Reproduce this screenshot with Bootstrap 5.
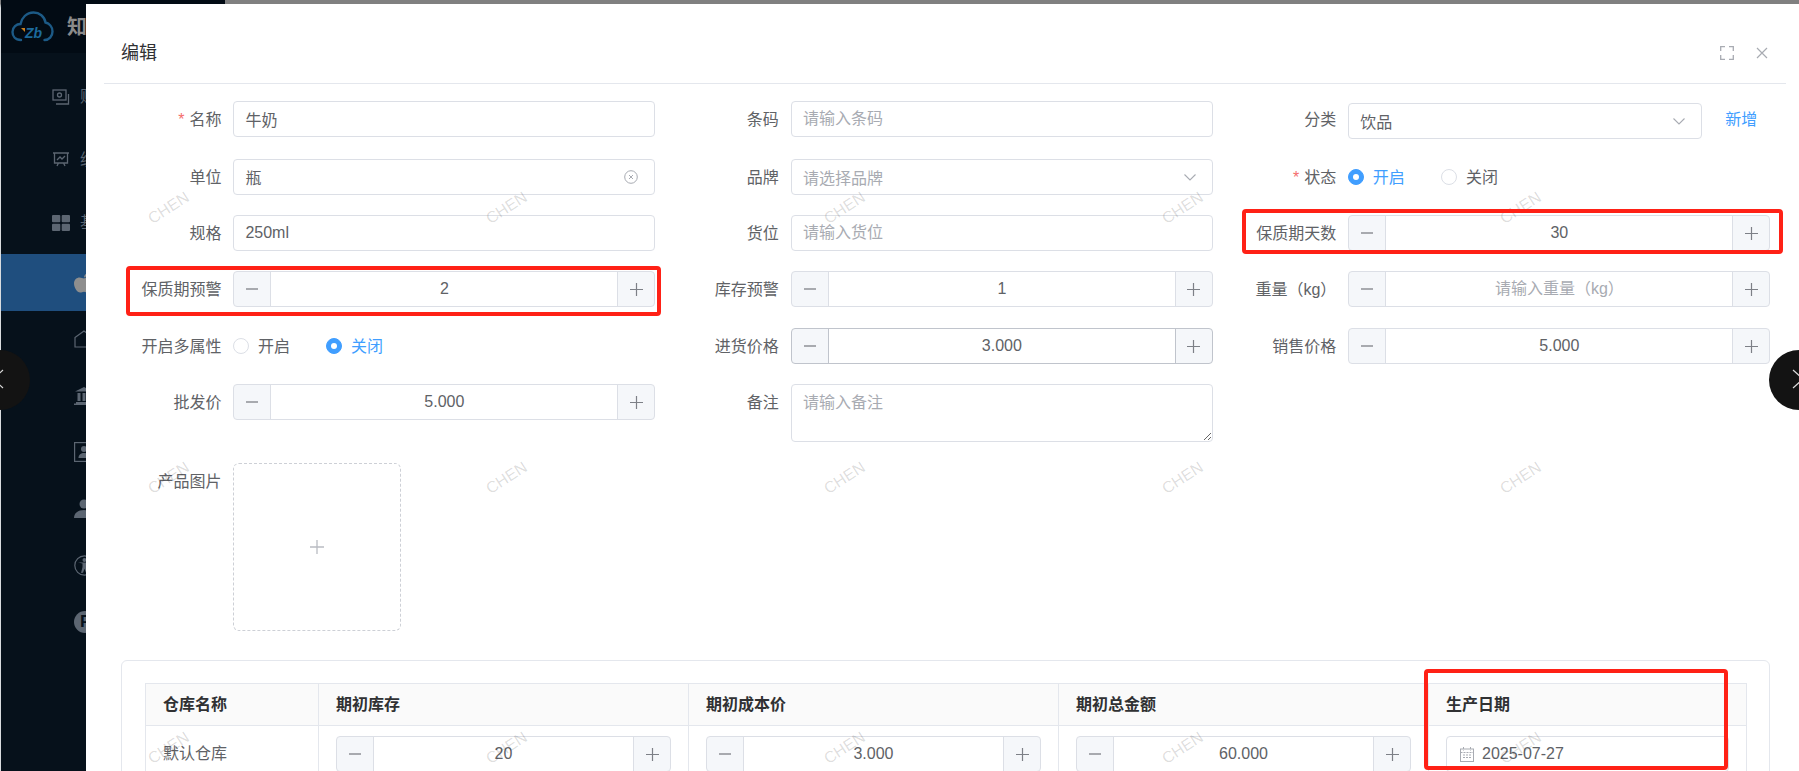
<!DOCTYPE html>
<html lang="zh-CN">
<head>
  <meta charset="UTF-8" />
  <title>编辑</title>
  <link rel="stylesheet" href="https://cdn.jsdelivr.net/npm/bootstrap@5.3.3/dist/css/bootstrap.min.css" />
  <script src="https://cdn.jsdelivr.net/npm/bootstrap@5.3.3/dist/js/bootstrap.bundle.min.js"></script>
  <style>
    html, body { height: 771px; overflow: hidden; }
    body {
      background: #808080;
      color: #606266;
      font: 16px/1.5 "Liberation Sans", "Noto Sans CJK SC", sans-serif;
    }
    /* page behind the dialog */
    .side-menu {
      width: 225px;
      height: 771px;
      background: #06111b;
      border-left: 1px solid #d9dcdf;
      border-top-left-radius: 8px;
      color: #5c6672;
    }
    .side-logo { height: 53px; background: #020b14; padding-left: 10px; }
    .side-logo b { color: #8a8a8a; font-size: 20px; margin-left: 13px; }
    .side-list { padding-top: 12px; }
    .side-top { height: 63px; padding-left: 51px; gap: 10px; }
    .side-sub { height: 56.5px; padding-left: 73px; }
    .side-sub.is-active { background: #1f4e7e; color: #8e8e8e; height: 57px; }
    .p-icon {
      width: 22px; height: 22px; border-radius: 50%;
      background: #5c6672; color: #06111b;
      font-weight: 700; font-size: 17px; line-height: 22px; padding-left: 6px;
    }
    /* dialog */
    .dlg {
      left: 86px; top: 4px; right: 0; bottom: 0;
      background: #fff;
      overflow: hidden;
    }
    .dlg-head {
      height: 80px;
      margin: 0 13px 0 18px;
      padding: 18px 18px 0 17px;
      border-bottom: 1px solid #e4e7ed;
    }
    .dlg-title { font-size: 18px; color: #303133; margin-top: 2px; }
    .dlg-tools { gap: 22px; }
    .dlg-form { margin: 17px 0 0 17.4px; width: 1672.5px; }
    .frow { height: 56px; }
    .frow.r58 { height: 58px; }
    .frow.r57 { height: 57px; }
    .frow.r79 { height: 79px; }
    .frow.r197 { height: 197px; }
    .flabel {
      flex: 0 0 118px;
      margin-right: 12px;
      text-align: right;
      line-height: 38px;
      height: 36px;
      white-space: nowrap;
    }
    .req { color: #f56c6c; margin-right: 5px; }
    .fbox { flex: 0 0 422px; width: 422px; }
    .form-control {
      height: 36px;
      padding: 0 11px;
      font-size: 16px;
      color: #606266;
      border: 1px solid #dcdfe6;
      border-radius: 4px;
      background: #fff;
    }
    .form-control::placeholder { color: #a8abb2; opacity: 1; }
    textarea.form-control { height: 58px; min-height: 58px; padding: 6px 11px; resize: both; }
    .pick-box { margin-top: 2px; flex: 0 0 354px; width: 354px; }
    .low-text { margin-top: 4px; }
    .hint-text { color: #a8abb2; }
    .add-link { color: #409eff; text-decoration: none; margin: 0 0 0 23px; line-height: 38px; height: 36px; }
    .input-group-text {
      width: 38px;
      padding: 0;
      justify-content: center;
      background: #f5f7fa;
      border-color: #dcdfe6;
      border-radius: 4px;
    }
    .input-group > .form-control { text-align: center; }
    .input-group.is-hover .form-control,
    .input-group.is-hover .input-group-text { border-color: #c0c4cc; }
    .radio-line { height: 36px; }
    .radio-item { gap: 8.500px; margin-right: 36.500px; line-height: 36px; padding-top: 2px; }
    .radio-item .form-check-input {
      width: 16px; height: 16px; margin: -2px 0 0;
      border-color: #dcdfe6;
    }
    .radio-item .form-check-input:checked {
      background-color: #409eff;
      border-color: #409eff;
      background-size: 12px;
    }
    .radio-item.is-on { color: #409eff; }
    .upload-box {
      width: 168px; height: 168px;
      border: 1px dashed #cdd0d6;
      border-radius: 6px;
    }
    /* stock table */
    .stock-card {
      margin-left: 35px;
      width: 1649px;
      height: 200px;
      padding: 22px 0 0 23px;
      border-color: #e4e7ed;
      border-radius: 6px;
    }
    .stock-table {
      width: 1602px;
      table-layout: fixed;
      margin: 0;
      --bs-table-border-color: #e4e7ed;
      --bs-table-color: #606266;
    }
    .stock-table th {
      height: 42px;
      padding: 0 17px;
      vertical-align: middle;
      background: #fafafa;
      color: #303133;
      font-weight: 700;
    }
    .stock-table td { padding: 10px 17px; vertical-align: middle; }
    .w-name { width: 173px; }
    .w-num { width: 370px; }
    .date-box { gap: 8px; padding-left: 13px; }
    /* things lying over the page */
    .wm-layer {
      left: 0; top: 0; width: 1799px; height: 771px;
      display: grid;
      grid-template-columns: repeat(5, 338px);
      grid-template-rows: repeat(3, 270px);
      padding: 72px 0 0 0;
      margin-left: -1px;
      pointer-events: none;
      z-index: 5;
    }
    .wm-text {
      width: 338px; height: 270px;
      padding-left: 147px;
      padding-top: 124px;
      color: rgba(0, 0, 0, .14);
      font-size: 16px;
      line-height: 24px;
      pointer-events: none;
    }
    .wm-text span { display: inline-block; transform: rotate(-33deg); }
    .mark-box {
      border: 4px solid #ff2116;
      border-radius: 4px;
      z-index: 6;
    }
    .mark-a { left: 126px; top: 266px; width: 535px; height: 50px; }
    .mark-b { left: 1242px; top: 209px; width: 541px; height: 45px; }
    .mark-c { left: 1424px; top: 669px; width: 304px; height: 101px; }
    .nav-round {
      width: 60px; height: 60px; top: 350px;
      border-radius: 50%;
      background: #131313;
      z-index: 7;
    }
    .nav-left { left: -30px; }
    .nav-right { left: 1769px; }
  </style>
</head>
<body class="position-relative">

  <div class="d-flex">
    <aside class="side-menu">
      <div class="side-logo d-flex align-items-center overflow-hidden">
        <svg width="43" height="32" viewBox="0 0 43 32" class="flex-shrink-0">
          <path d="M10 29C4 29 1.500 25 1.500 21c0-5 4-8 8-8 1-6 6-11.500 13-11.500 6 0 11 4 12 10 4 1 7 4.500 7 9 0 5-3.500 8.500-8 8.500" fill="none" stroke="#1c5a86" stroke-width="2.400" stroke-linecap="round"/>
          <path d="M10 17l4 0 0 4z" fill="#c9801f"/>
          <text x="14" y="27" fill="#1c6a9c" font-family="Liberation Sans" font-weight="700" font-style="italic" font-size="14">Zb</text>
        </svg>
        <b class="text-nowrap">知识</b>
      </div>
      <div class="side-list">
        <div class="side-top d-flex align-items-center text-nowrap">
          <svg width="18" height="16" viewBox="0 0 18 16" fill="none" stroke="#5c6672" stroke-width="1.300"><rect x="1" y="1" width="13" height="10"/><circle cx="7.500" cy="6" r="2"/><path d="M16.500 5v10H4"/></svg>
          账务
        </div>
        <div class="side-top d-flex align-items-center text-nowrap">
          <svg width="18" height="16" viewBox="0 0 18 16" fill="none" stroke="#5c6672" stroke-width="1.300"><path d="M1 1h16M2.500 1v10h13V1M5 14l1.500-3M13 14l-1.500-3M5 8l3-3 2 2 3-3"/></svg>
          绩效
        </div>
        <div class="side-top d-flex align-items-center text-nowrap">
          <svg width="18" height="16" viewBox="0 0 18 16" fill="#5c6672"><rect width="8.300" height="7.300" rx="1"/><rect x="9.700" width="8.300" height="7.300" rx="1"/><rect y="8.700" width="8.300" height="7.300" rx="1"/><rect x="9.700" y="8.700" width="8.300" height="7.300" rx="1"/></svg>
          基础
        </div>
        <div class="side-sub is-active d-flex align-items-center">
          <svg width="20" height="20" viewBox="0 0 20 20" fill="#8e8e8e"><path d="M10 5.500c2-1.500 6-1.500 8 1.500-3 2-2.500 6 .8 7.500-1 2.500-3 5-5 5-1.500 0-2.300-.8-3.800-.8s-2.300.8-3.800.8C3 19.500 0 14.500 0 10.500 0 6.500 3 4.500 5.500 4.500c1.800 0 3.300 1 4.500 1zM10 4.500c0-2 1.500-4 3.500-4.500 .2 2-1.500 4.300-3.500 4.500z"/></svg>
        </div>
        <div class="side-sub d-flex align-items-center">
          <svg width="20" height="18" viewBox="0 0 20 18" fill="none" stroke="#5c6672" stroke-width="1.200"><path d="M1 7.500L10 1l9 6.500V17H1z"/></svg>
        </div>
        <div class="side-sub d-flex align-items-center">
          <svg width="20" height="18" viewBox="0 0 20 18" fill="#5c6672"><path d="M10 0l9 4.500H1zM2 15h16v1.500H2zM0 16.500h20V18H0zM3.500 6h3v8h-3zM8.500 6h3v8h-3zM13.500 6h3v8h-3z"/></svg>
        </div>
        <div class="side-sub d-flex align-items-center">
          <svg width="20" height="20" viewBox="0 0 20 20"><rect x=".6" y=".6" width="18.800" height="18.800" fill="none" stroke="#5c6672" stroke-width="1.200"/><circle cx="10" cy="7" r="3" fill="#5c6672"/><path d="M4.500 16c0-3.500 2.500-5 5.500-5s5.500 1.500 5.500 5z" fill="#5c6672"/></svg>
        </div>
        <div class="side-sub d-flex align-items-center">
          <svg width="20" height="20" viewBox="0 0 20 20" fill="#5c6672"><circle cx="10" cy="5" r="4.500"/><path d="M0 19c0-5 4-8 10-8s10 3 10 8z"/></svg>
        </div>
        <div class="side-sub d-flex align-items-center">
          <svg width="21" height="21" viewBox="0 0 21 21"><circle cx="10.500" cy="10.500" r="9.700" fill="none" stroke="#5c6672" stroke-width="1.200"/><circle cx="10.500" cy="5" r="2" fill="#5c6672"/><path d="M4 7.500l4.500 1v3.500L7 18l2-.3 1.500-4 1.500 4 2 .3-1.500-6V8.500l4.500-1z" fill="#5c6672"/></svg>
        </div>
        <div class="side-sub d-flex align-items-center">
          <span class="p-icon">P</span>
        </div>
      </div>
    </aside>
  </div>

  <div class="dlg position-absolute">
    <div class="dlg-head d-flex align-items-center justify-content-between">
      <div class="dlg-title">编辑</div>
      <div class="dlg-tools d-flex align-items-center">
        <svg width="14" height="14" viewBox="0 0 14 14" fill="none" stroke="#a8abb2" stroke-width="1.300"><path d="M5 .7H.7V5M9 .7h4.300V5M5 13.300H.7V9M9 13.300h4.300V9"/></svg>
        <svg width="12" height="12" viewBox="0 0 12 12" fill="none" stroke="#a8abb2" stroke-width="1.200"><path d="M1 1l10 10M11 1L1 11"/></svg>
      </div>
    </div>

    <form class="dlg-form">
      <div class="row g-0 frow r58">
        <div class="col-4 d-flex">
          <label class="flabel"><span class="req">*</span>名称</label>
          <div class="fbox"><input class="form-control" value="牛奶"></div>
        </div>
        <div class="col-4 d-flex">
          <label class="flabel">条码</label>
          <div class="fbox"><input class="form-control" placeholder="请输入条码"></div>
        </div>
        <div class="col-4 d-flex">
          <label class="flabel">分类</label>
          <div class="form-control pick-box d-flex align-items-center justify-content-between pe-3">
            <span class="low-text">饮品</span>
            <svg width="12" height="7" viewBox="0 0 12 7" fill="none" stroke="#a8abb2" stroke-width="1.100"><path d="M.5.500L6 6l5.500-5.500"/></svg>
          </div>
          <a class="add-link" href="#">新增</a>
        </div>
      </div>

      <div class="row g-0 frow">
        <div class="col-4 d-flex">
          <label class="flabel">单位</label>
          <div class="form-control fbox d-flex align-items-center justify-content-between pe-2">
            <span class="low-text">瓶</span>
            <svg width="14" height="14" viewBox="0 0 14 14" fill="none" stroke="#a8abb2" class="me-2"><circle cx="7" cy="7" r="6.300"/><path d="M5 5l4 4M9 5L5 9"/></svg>
          </div>
        </div>
        <div class="col-4 d-flex">
          <label class="flabel">品牌</label>
          <div class="form-control fbox d-flex align-items-center justify-content-between pe-3">
            <span class="hint-text low-text">请选择品牌</span>
            <svg width="12" height="7" viewBox="0 0 12 7" fill="none" stroke="#a8abb2" stroke-width="1.100"><path d="M.5.500L6 6l5.500-5.500"/></svg>
          </div>
        </div>
        <div class="col-4 d-flex">
          <label class="flabel"><span class="req">*</span>状态</label>
          <div class="radio-line d-flex align-items-center">
            <label class="radio-item is-on d-flex align-items-center"><input class="form-check-input" type="radio" name="st" checked>开启</label>
            <label class="radio-item d-flex align-items-center"><input class="form-check-input" type="radio" name="st">关闭</label>
          </div>
        </div>
      </div>

      <div class="row g-0 frow">
        <div class="col-4 d-flex">
          <label class="flabel">规格</label>
          <div class="fbox"><input class="form-control" value="250ml"></div>
        </div>
        <div class="col-4 d-flex">
          <label class="flabel">货位</label>
          <div class="fbox"><input class="form-control" placeholder="请输入货位"></div>
        </div>
        <div class="col-4 d-flex">
          <label class="flabel">保质期天数</label>
          <div class="fbox num-slot" data-value="30"></div>
        </div>
      </div>

      <div class="row g-0 frow r57">
        <div class="col-4 d-flex">
          <label class="flabel">保质期预警</label>
          <div class="fbox num-slot" data-value="2"></div>
        </div>
        <div class="col-4 d-flex">
          <label class="flabel">库存预警</label>
          <div class="fbox num-slot" data-value="1"></div>
        </div>
        <div class="col-4 d-flex">
          <label class="flabel">重量（kg）</label>
          <div class="fbox num-slot" data-hint="请输入重量（kg）"></div>
        </div>
      </div>

      <div class="row g-0 frow">
        <div class="col-4 d-flex">
          <label class="flabel">开启多属性</label>
          <div class="radio-line d-flex align-items-center">
            <label class="radio-item d-flex align-items-center"><input class="form-check-input" type="radio" name="ma">开启</label>
            <label class="radio-item is-on d-flex align-items-center"><input class="form-check-input" type="radio" name="ma" checked>关闭</label>
          </div>
        </div>
        <div class="col-4 d-flex">
          <label class="flabel">进货价格</label>
          <div class="fbox num-slot" data-value="3.000" data-hover="1"></div>
        </div>
        <div class="col-4 d-flex">
          <label class="flabel">销售价格</label>
          <div class="fbox num-slot" data-value="5.000"></div>
        </div>
      </div>

      <div class="row g-0 frow r79">
        <div class="col-4 d-flex">
          <label class="flabel">批发价</label>
          <div class="fbox num-slot" data-value="5.000"></div>
        </div>
        <div class="col-4 d-flex">
          <label class="flabel">备注</label>
          <div class="fbox"><textarea class="form-control" placeholder="请输入备注"></textarea></div>
        </div>
      </div>

      <div class="row g-0 frow r197">
        <div class="col-4 d-flex">
          <label class="flabel">产品图片</label>
          <div class="upload-box d-flex align-items-center justify-content-center">
            <svg width="14" height="14" viewBox="0 0 14 14" stroke="#b9bcc2" stroke-width="1.300"><path d="M7 0v14M0 7h14"/></svg>
          </div>
        </div>
      </div>
    </form>

    <div class="card stock-card">
      <table class="table table-bordered stock-table">
        <colgroup>
          <col class="w-name"><col class="w-num"><col class="w-num"><col class="w-num"><col>
        </colgroup>
        <thead>
          <tr><th>仓库名称</th><th>期初库存</th><th>期初成本价</th><th>期初总金额</th><th>生产日期</th></tr>
        </thead>
        <tbody>
          <tr>
            <td>默认仓库</td>
            <td class="num-slot" data-value="20"></td>
            <td class="num-slot" data-value="3.000"></td>
            <td class="num-slot" data-value="60.000"></td>
            <td>
              <div class="form-control date-box d-flex align-items-center">
                <svg width="14" height="15" viewBox="0 0 14 15" fill="none" stroke="#a8abb2"><rect x=".5" y="2" width="13" height="12.500"/><path d="M.5 5.500h13M3.500 0v3.500M10.500 0v3.500M3 8h8M3 10.500h8" stroke-dasharray="2 1"/></svg>
                2025-07-27
              </div>
            </td>
          </tr>
        </tbody>
      </table>
    </div>
  </div>

  <div id="wmLayer" class="wm-layer position-absolute"></div>

  <div class="mark-box mark-a position-absolute"></div>
  <div class="mark-box mark-b position-absolute"></div>
  <div class="mark-box mark-c position-absolute"></div>

  <div class="nav-round nav-left position-absolute">
    <svg width="60" height="60" viewBox="0 0 60 60" fill="none" stroke="#d8d8d8" stroke-width="1.200"><path d="M33 20L23 29l10 9"/></svg>
  </div>
  <div class="nav-round nav-right position-absolute">
    <svg width="60" height="60" viewBox="0 0 60 60" fill="none" stroke="#d8d8d8" stroke-width="1.200"><path d="M24 20l10 9-10 9"/></svg>
  </div>

  <script>
    const minusIcon = '<svg width="12" height="2" viewBox="0 0 12 2" stroke="#7d8087" stroke-width="1.300"><path d="M0 1h12"/></svg>';
    const plusIcon = '<svg width="13" height="13" viewBox="0 0 13 13" stroke="#7d8087" stroke-width="1.200"><path d="M6.500 0v13M0 6.500h13"/></svg>';

    document.querySelectorAll('.num-slot').forEach(function (slot) {
      const value = slot.dataset.value || '';
      const hint = slot.dataset.hint || '';
      const hover = slot.dataset.hover ? ' is-hover' : '';
      slot.innerHTML = `<div class="input-group${hover}">
        <span class="input-group-text">${minusIcon}</span>
        <input class="form-control" value="${value}" placeholder="${hint}">
        <span class="input-group-text">${plusIcon}</span>
      </div>`;
    });

    const wm = document.getElementById('wmLayer');
    for (let i = 0; i < 15; i++) {
      wm.innerHTML += '<div class="wm-text"><span>CHEN</span></div>';
    }
  </script>
</body>
</html>
